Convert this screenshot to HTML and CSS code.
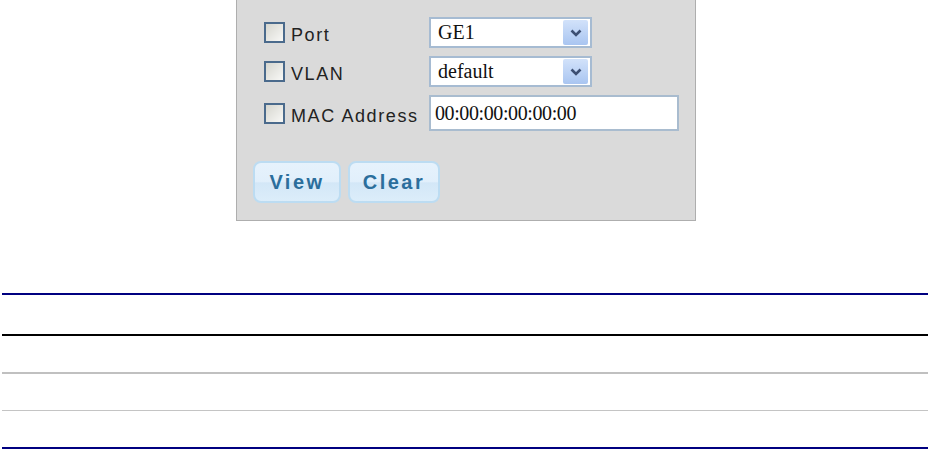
FILE: index.html
```html
<!DOCTYPE html>
<html lang="en">

<head>
    <meta charset="UTF-8" />
    <meta name="viewport" content="width=device-width, initial-scale=1.0" />
    <title>MAC Address Table</title>

    <link rel="stylesheet" href="styles.css">
</head>

<body>
    <div class="panel">
        <form class="filter">
            <div class="row">
                <label class="check"><span class="box"></span>Port</label>
                <div class="select">
                    <span class="select-value">GE1</span>
                    <span class="select-arrow">
                        <svg width="12" height="8" viewBox="0 0 12 8"><path d="M1.5 1.5 L6 6 L10.5 1.5" fill="none" stroke="#3d4f73" stroke-width="2.6"/></svg>
                    </span>
                </div>
            </div>
            <div class="row">
                <label class="check"><span class="box"></span>VLAN</label>
                <div class="select">
                    <span class="select-value">default</span>
                    <span class="select-arrow">
                        <svg width="12" height="8" viewBox="0 0 12 8"><path d="M1.5 1.5 L6 6 L10.5 1.5" fill="none" stroke="#3d4f73" stroke-width="2.6"/></svg>
                    </span>
                </div>
            </div>
            <div class="row row-mac">
                <label class="check"><span class="box"></span>MAC Address</label>
                <input class="text-input" type="text" value="00:00:00:00:00:00">
            </div>
            <div class="actions">
                <button type="button">View</button>
                <button type="button">Clear</button>
            </div>
        </form>
    </div>

    <!-- empty table rules below the filter -->
    <div class="rules">
        <div class="rule rule-navy"></div>
        <div class="rule rule-black"></div>
        <div class="rule rule-gray"></div>
        <div class="rule rule-light"></div>
        <div class="rule rule-navy"></div>
    </div>
</body>

</html>
```

FILE: styles.css
```css
:root {
    --panel-bg: #dadada;
    --panel-border: #aeaeae;
    --field-border: #a6bbd2;
    --button-text: #2b6e9c;
    --navy: #000080;
}

body {
    margin: 0;
    font-family: "Liberation Sans", Arial, sans-serif;
    background: #fff;
}

.panel {
    box-sizing: border-box;
    width: 460px;
    height: 221px;
    margin-left: 236px;
    padding: 17px 0 0 16px;
    background-color: var(--panel-bg);
    border: 1px solid var(--panel-border);
    border-top: none;
}

.row {
    display: grid;
    grid-template-columns: 165px auto;
    align-items: center;
    padding-left: 11px;
    margin-bottom: 8px;
}

.row-mac {
    margin-bottom: 30px;
}

.check {
    display: flex;
    align-items: flex-end;
    gap: 6px;
    font-size: 18px;
    line-height: 16px;
    letter-spacing: 1.6px;
    color: #222;
}

.box {
    box-sizing: border-box;
    width: 21px;
    height: 21px;
    border: 2px solid #4a6a8c;
    background: linear-gradient(135deg, #d6d6cf, #f8f8f6);
}

.select {
    box-sizing: border-box;
    display: flex;
    align-items: center;
    justify-content: space-between;
    width: 163px;
    height: 31px;
    padding: 1px 2px 1px 7px;
    background: #fff;
    border: 2px solid var(--field-border);
}

.select-value,
.text-input {
    font-family: "Liberation Serif", "Times New Roman", serif;
    font-size: 20px;
    color: #111;
}

.select-arrow {
    display: flex;
    align-items: center;
    justify-content: center;
    width: 25px;
    height: 100%;
    background: linear-gradient(#d2e2fa, #a9c5f1);
    border-radius: 2px;
}

.text-input {
    box-sizing: border-box;
    width: 250px;
    height: 36px;
    margin: 0;
    padding: 0 4px;
    border: 2px solid #a9bccf;
    letter-spacing: -0.4px;
    outline: none;
}

.actions {
    display: flex;
    gap: 7px;

    button {
        box-sizing: border-box;
        height: 42px;
        padding: 0;
        font-family: "Liberation Sans", Arial, sans-serif;
        font-size: 20px;
        font-weight: 700;
        letter-spacing: 2.5px;
        color: var(--button-text);
        background: linear-gradient(#e6f2fc 0%, #e1effb 50%, #d3e7f7 52%, #dcedfa 100%);
        border: 2px solid #bcdcf2;
        border-radius: 8px;
    }

    button:first-child {
        width: 88px;
    }

    button:last-child {
        width: 92px;
    }
}

.rules {
    margin: 72px 1px 0 2px;

    .rule {
        height: 2px;
        margin-top: 36px;
    }

    .rule:first-child {
        margin-top: 0;
    }

    .rule-black {
        margin-top: 39px;
        background-color: #000;
    }

    .rule-light {
        height: 1px;
        background-color: #c4c4c4;
    }
}

.rule-navy {
    background-color: var(--navy);
}

.rule-gray {
    background-color: #c0c0c0;
}
```
